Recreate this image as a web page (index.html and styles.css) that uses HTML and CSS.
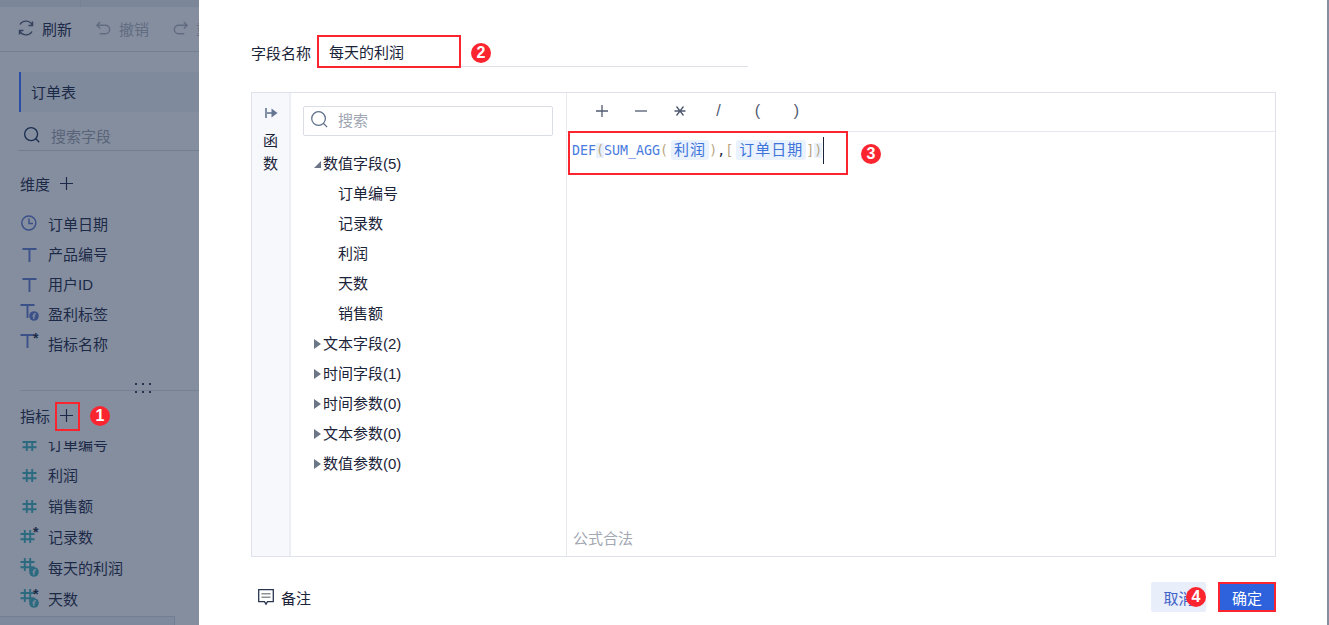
FILE: index.html
```html
<!DOCTYPE html>
<html lang="zh">
<head>
<meta charset="utf-8">
<title>字段名称</title>
<link rel="stylesheet" href="styles.css">
</head>
<body>
<svg class="defs" width="0" height="0">
  <symbol id="i-t" viewBox="0 0 18 18"><path d="M2.500 5h14M9.500 5v13" fill="none" stroke="currentColor" stroke-width="1.900"/></symbol>
  <symbol id="i-h" viewBox="0 0 18 18"><path d="M2.500 7h14M2.500 12.200h14M6.800 3v13M12.200 3v13" fill="none" stroke="currentColor" stroke-width="1.900"/></symbol>
  <symbol id="i-f" viewBox="0 0 10 10"><circle cx="5" cy="5" r="4.800" fill="currentColor"/><path d="M7 2.800H5.800Q4.800 2.800 4.800 3.800V8M3.400 5h2.800" fill="none" stroke="#858e9f" stroke-width="1.200"/></symbol>
  <symbol id="i-plus" viewBox="0 0 13 13"><path d="M6.500 0v13M0 6.500h13" fill="none" stroke="currentColor" stroke-width="1.200"/></symbol>
</svg>
<div class="page">
  <aside class="app">
    <div class="app-strip"></div>
    <div class="app-tools">
      <span class="tool"><svg class="ti" viewBox="0 0 18 18"><path d="M15.500 6.500A7 7 0 0 0 3 5.500M15.500 2.500v4h-4M2.500 11.500A7 7 0 0 0 15 12.500M2.500 15.500v-4h4" fill="none" stroke="currentColor" stroke-width="1.400"/></svg>刷新</span>
      <span class="tool off"><svg class="ti" viewBox="0 0 18 18"><path d="M5.500 2 2 5.500 5.500 9M2 5.500h9a4.500 4.500 0 0 1 0 9H5" fill="none" stroke="currentColor" stroke-width="1.500"/></svg>撤销</span>
      <span class="tool off"><svg class="ti" viewBox="0 0 18 18"><path d="M12.500 2 16 5.500 12.500 9M16 5.500H7a4.500 4.500 0 0 0 0 9h6" fill="none" stroke="currentColor" stroke-width="1.500"/></svg>重做</span>
    </div>
    <div class="app-tab">订单表</div>
    <div class="app-search">
      <svg class="si" viewBox="0 0 20 20"><circle cx="9" cy="9" r="7.200" fill="none" stroke="currentColor" stroke-width="1.500"/><path d="M14 14l4 4" stroke="currentColor" stroke-width="1.500"/></svg>
      <span>搜索字段</span>
    </div>
    <div class="app-head dim-head">维度<svg class="plus"><use href="#i-plus"/></svg></div>
    <ul class="fields dims">
      <li><svg class="fi" viewBox="0 0 18 18"><circle cx="8.800" cy="9" r="7" fill="none" stroke="currentColor" stroke-width="1.500"/><path d="M9 4.500V9.500H13" fill="none" stroke="currentColor" stroke-width="1.500"/></svg>订单日期</li>
      <li><svg class="fi"><use href="#i-t"/></svg>产品编号</li>
      <li><svg class="fi"><use href="#i-t"/></svg>用户ID</li>
      <li><span class="fx"><svg class="fi"><use href="#i-t"/></svg><svg class="bd"><use href="#i-f"/></svg></span>盈利标签</li>
      <li><span class="fx"><svg class="fi"><use href="#i-t"/></svg><i class="st">*</i></span>指标名称</li>
    </ul>
    <div class="splitter"><span class="dots"></span></div>
    <div class="app-head mea-head">指标<svg class="plus"><use href="#i-plus"/></svg></div>
    <div class="clip">
      <ul class="fields meas">
        <li><svg class="fi"><use href="#i-h"/></svg>订单编号</li>
        <li><svg class="fi"><use href="#i-h"/></svg>利润</li>
        <li><svg class="fi"><use href="#i-h"/></svg>销售额</li>
        <li><span class="fx low"><svg class="fi"><use href="#i-h"/></svg><i class="st">*</i></span>记录数</li>
        <li><span class="fx"><svg class="fi"><use href="#i-h"/></svg><svg class="bd"><use href="#i-f"/></svg></span>每天的利润</li>
        <li><span class="fx"><svg class="fi"><use href="#i-h"/></svg><svg class="bd"><use href="#i-f"/></svg><i class="st">*</i></span>天数</li>
      </ul>
      <div class="app-box"></div>
    </div>
  </aside>

  <main class="dialog">
    <div class="name-row">
      <label class="name-label">字段名称</label>
      <div class="name-input">每天的利润</div>
    </div>
    <section class="editor">
      <div class="fn-rail">
        <svg class="rail-i" viewBox="0 0 14 14"><path d="M2 2v10" stroke="currentColor" stroke-width="1.600"/><path d="M3 7h5" stroke="currentColor" stroke-width="1.600"/><path d="M7.500 2.500l6 4.500-6 4.500z" fill="currentColor"/></svg>
        <span>函</span><span>数</span>
      </div>
      <div class="tree-col">
        <div class="tree-search">
          <svg class="si2" viewBox="0 0 20 20"><circle cx="9" cy="9" r="7.200" fill="none" stroke="currentColor" stroke-width="1.300"/><path d="M14 14l4 4" stroke="currentColor" stroke-width="1.300"/></svg>
          <span>搜索</span>
        </div>
        <ul class="tree">
          <li class="node"><i class="tri open"></i>数值字段(5)</li>
          <li class="leaf">订单编号</li>
          <li class="leaf">记录数</li>
          <li class="leaf">利润</li>
          <li class="leaf">天数</li>
          <li class="leaf">销售额</li>
          <li class="node"><i class="tri"></i>文本字段(2)</li>
          <li class="node"><i class="tri"></i>时间字段(1)</li>
          <li class="node"><i class="tri"></i>时间参数(0)</li>
          <li class="node"><i class="tri"></i>文本参数(0)</li>
          <li class="node"><i class="tri"></i>数值参数(0)</li>
        </ul>
      </div>
      <div class="formula">
        <div class="ops">
          <span><svg class="op" viewBox="0 0 14 14"><path d="M7 1v12M1 7h12" fill="none" stroke="currentColor" stroke-width="1.300"/></svg></span>
          <span><svg class="op" viewBox="0 0 14 14"><path d="M1 7h12" fill="none" stroke="currentColor" stroke-width="1.300"/></svg></span>
          <span><svg class="op" viewBox="0 0 14 14"><path d="M1.500 7h11M3.500 2.500l7 9M10.500 2.500l-7 9" fill="none" stroke="currentColor" stroke-width="1.300"/></svg></span>
          <span>/</span><span>(</span><span>)</span>
        </div>
        <div class="code"><span class="fn">DEF</span><span class="par hl">(</span><span class="fn">SUM_AGG</span><span class="par">(</span><span class="chip">利润</span><span class="par">)</span><span class="com">,</span><span class="par">[</span><span class="chip">订单日期</span><span class="par">]</span><span class="par hl">)</span><i class="caret"></i></div>
        <div class="status">公式合法</div>
      </div>
    </section>
    <footer class="foot">
      <span class="note"><svg class="note-i" viewBox="0 0 16 17"><path d="M.700.700h14.600v12H9.500l-1.500 2.500-1.500-2.500H.700z" fill="none" stroke="currentColor" stroke-width="1.300"/><path d="M3.500 4.800h9M3.500 8.200h9" stroke="#8b9291" stroke-width="1.400"/></svg>备注</span>
      <span class="btns">
        <button class="btn cancel">取消</button>
        <button class="btn ok">确定</button>
      </span>
    </footer>
  </main>
  <div class="edge"></div>

  <div class="mark m1"></div><b class="badge b1">1</b>
  <div class="mark m2"></div><b class="badge b2">2</b>
  <div class="mark m3"></div><b class="badge b3">3</b>
  <div class="mark m4"></div><b class="badge b4">4</b>
</div>
</body>
</html>
```

FILE: styles.css
```css
* { box-sizing: border-box; }
html, body { margin: 0; height: 100%; overflow: hidden; }
body { font-family: "Liberation Sans", "Noto Sans CJK SC", sans-serif; font-size: 15px; color: #1b2a4a; background: #fff; }
ul { list-style: none; margin: 0; padding: 0; }
.defs { position: absolute; }
.page { position: relative; display: flex; width: 1329px; height: 625px; overflow: hidden; }

/* dimmed application */
.app { width: 199px; flex: none; display: flex; flex-direction: column; background: #858e9f; color: #1c2a48; overflow: hidden; }
.app-strip { height: 7px; flex: none; background: linear-gradient(90deg, #7c8699 80px, #76808f 80px, #76808f 81px, #7c8699 81px); }
.app-tools { height: 45px; flex: none; display: flex; align-items: center; gap: 23px; padding: 0 0 2px 17px; border-bottom: 1px solid #757f93; white-space: nowrap; }
.tool { display: inline-flex; align-items: center; gap: 7px; flex: none; }
.tool.off { color: #616c81; }
.ti { width: 18px; height: 18px; }
.tool.off .ti { width: 17px; height: 17px; }
.tool:first-child .ti { color: #34415c; }
.app-tab { height: 40px; flex: none; margin: 20px 0 0 19px; padding-left: 10px; line-height: 42px; border-left: 2px solid #2a4ea6; background: #7f8a9c; }
.app-search { height: 35px; flex: none; margin: 4px 0 0 18px; display: flex; align-items: center; gap: 10px; padding: 4px 0 0 5px; border-bottom: 1px solid #737d91; color: #596479; }
.si { width: 18px; height: 18px; color: #1c2f50; flex: none; }
.app-head { display: flex; align-items: center; padding-left: 20px; flex: none; }
.dim-head { height: 30px; margin-top: 17px; }
.plus { width: 13px; height: 13px; margin-left: 10px; flex: none; }
.fields li { display: flex; align-items: center; white-space: nowrap; }
.dims { margin-top: 10px; color: #1c2a48; }
.dims li { height: 30px; }
.dims .fi, .dims .fx { color: #3d5189; }
.fi { width: 18px; height: 18px; flex: none; margin: 0 10px 0 20px; display: block; }
.fx { position: relative; display: block; flex: none; width: 48px; height: 18px; }
.fx .fi { margin: -4px 0 0 18px; }
.fx.low .fi { margin-top: -1px; }
.bd { position: absolute; left: 29px; top: 7px; width: 10px; height: 10px; }
.meas .bd { top: 8px; }
.st { position: absolute; left: 33px; top: -2px; font: 700 14px/12px "Liberation Sans", sans-serif; color: #1c2a48; }
.splitter { height: 33px; flex: none; position: relative; margin: 0 0 0 20px; border-bottom: 1px solid #778196; }
.dots { position: absolute; left: 115px; top: 25px; width: 18px; height: 11px; background: radial-gradient(circle at 1px 1px, #26344f 1px, transparent 1.300px) 0 0 / 7px 8px; }
.mea-head { height: 50px; padding-bottom: 2px; }
.clip { flex: 1; min-height: 0; overflow: hidden; position: relative; }
.meas { margin-top: -13px; }
.meas li { height: 31px; }
.meas .fi, .meas .fx { color: #2c6a80; }
.app-box { position: absolute; left: -1px; top: 175px; width: 176px; height: 40px; border: 1px solid #737e95; background: #7f899d; }

/* dialog */
.dialog { flex: 1; min-width: 0; background: #fff; padding: 36px 51px 0 52px; color: #1a2338; }
.name-row { display: flex; align-items: center; height: 31px; }
.name-label { width: 67px; flex: none; margin-top: 2px; }
.name-input { width: 430px; height: 31px; line-height: 33px; padding-left: 11px; border-bottom: 1px solid #dfe1ea; }
.editor { display: flex; height: 465px; margin-top: 25px; border: 1px solid #dfe2ea; }
.fn-rail { width: 39px; flex: none; display: flex; flex-direction: column; align-items: center; background: #f6f8fc; border-right: 2px solid #eceef3; line-height: 23px; padding-top: 13px; }
.rail-i { width: 14px; height: 14px; color: #667690; margin-bottom: 9px; }
.tree-col { width: 276px; flex: none; border-right: 1px solid #e6e8ee; padding: 13px 13px 0 12px; }
.tree-search { height: 30px; display: flex; align-items: center; gap: 9px; padding: 0 0 3px 6px; border: 1px solid #dadde5; border-radius: 2px; color: #a0a6b2; }
.si2 { width: 19px; height: 19px; color: #5e6f8a; flex: none; }
.tree { margin-top: 13px; }
.tree li { height: 30px; line-height: 28px; white-space: nowrap; }
.tree .leaf { padding-left: 35px; line-height: 30px; }
.node { display: flex; align-items: center; padding-left: 11px; }
.tri { width: 0; height: 0; margin-right: 2px; border-style: solid; border-width: 5px 0 5px 7px; border-color: transparent transparent transparent #6c7686; }
.tri.open { width: 7px; height: 7px; border-width: 0 0 7px 7px; border-color: transparent transparent #6c7686 transparent; }
.formula { flex: 1; min-width: 0; display: flex; flex-direction: column; }
.ops { height: 39px; flex: none; display: flex; padding: 0 0 2px 15px; border-bottom: 1px solid #e6e8ee; font: 16px/18px "Liberation Sans", sans-serif; color: #4f5a70; }
.ops span { width: 39px; display: flex; align-items: center; justify-content: center; }
.op { width: 14px; height: 14px; }
.code { height: 36px; flex: none; display: flex; align-items: center; padding-left: 5px; font-family: "DejaVu Sans Mono", monospace; font-size: 13.3px; }
.fn { color: #4a7ce0; }
.par { color: #b9a57f; }
.com { color: #1a2338; }
.hl { background: #e8f1fc; }
.chip { padding: 0 3px 0 3px; margin: 0 0 0 3px; height: 20px; line-height: 19px; letter-spacing: 1px; font-family: "Liberation Sans", "Noto Sans CJK SC", sans-serif; font-size: 15px; color: #3f74da; background: #e9f2fd; border-radius: 3px; }
.caret { width: 1px; height: 27px; margin-left: 1px; background: #1a2338; }
.status { margin-top: auto; height: 36px; line-height: 38px; padding-left: 6px; color: #a3a8b3; }
.foot { display: flex; align-items: center; justify-content: space-between; margin-top: 25px; height: 30px; }
.note { display: inline-flex; align-items: center; gap: 7px; padding-left: 7px; }
.note-i { width: 16px; height: 17px; color: #2a3550; }
.btns { display: flex; gap: 12px; }
.btn { height: 30px; border: 0; border-radius: 2px; font: inherit; padding: 0; }
.cancel { width: 55px; background: #e8eefa; color: #3f63c8; }
.ok { width: 58px; background: #2d62dc; color: #fff; }
.edge { width: 2px; flex: none; background: #858e9f; }

/* annotations */
.mark { position: absolute; border: 2px solid #fb2530; }
.badge { position: absolute; width: 20px; height: 20px; border-radius: 50%; background: #fb2530; color: #fff; text-align: center; font: 700 16px/20px "Liberation Sans", sans-serif; }
.m1 { left: 55px; top: 402px; width: 25px; height: 29px; }
.m2 { left: 317px; top: 35px; width: 144px; height: 33px; }
.m3 { left: 568px; top: 131px; width: 280px; height: 44px; }
.m4 { left: 1218px; top: 582px; width: 58px; height: 30px; }
.b1 { left: 90px; top: 406px; }
.b2 { left: 471px; top: 43px; }
.b3 { left: 861px; top: 144px; }
.b4 { left: 1186px; top: 587px; }
```
